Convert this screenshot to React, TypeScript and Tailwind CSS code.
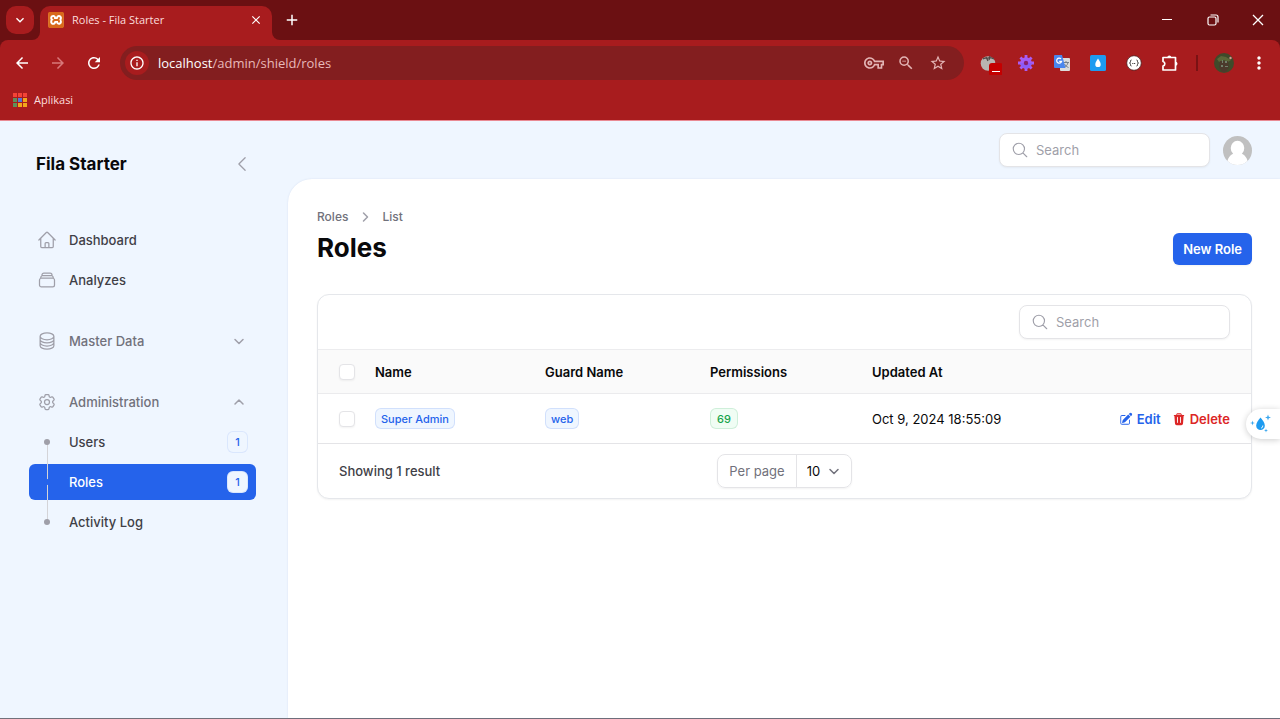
import React, { useState } from "react";
import {
  MdArrowBack,
  MdArrowForward,
  MdRefresh,
  MdInfoOutline,
  MdOutlineVpnKey,
  MdZoomOut,
  MdStarBorder,
  MdMoreVert,
  MdClose,
  MdAdd,
  MdKeyboardArrowDown,
} from "react-icons/md";
import { SiXampp } from "react-icons/si";
import {
  HiOutlineHome,
  HiOutlineRectangleStack,
  HiOutlineCircleStack,
  HiOutlineCog6Tooth,
  HiOutlineChevronLeft,
  HiOutlineMagnifyingGlass,
  HiPencilSquare,
  HiTrash,
} from "react-icons/hi2";

const appTiles = [
  "bg-[#f44336]", "bg-[#f44336]", "bg-[#f44336]",
  "bg-[#5f8f5a]", "bg-[#5478d8]", "bg-[#f2a61c]",
  "bg-[#5f8f5a]", "bg-[#f2a61c]", "bg-[#f2a61c]",
];

function TabStrip() {
  return (
    <div className="flex h-10 items-end bg-[#6b1012] pl-1.5 text-white">
      <button aria-label="Search tabs" className="mb-1.5 flex size-7 items-center justify-center rounded-[10px] bg-[#a81c1e]">
        <MdKeyboardArrowDown className="size-4" />
      </button>
      <div className="relative ml-1.5 flex h-[34px] w-58 items-center rounded-t-[10px] bg-[#a81c1e] pb-1.5 pr-2 pl-2">
        <span className="absolute bottom-0 -left-2 size-2 bg-[#a81c1e]">
          <span className="block size-2 rounded-br-lg bg-[#6b1012]" />
        </span>
        <span className="absolute -right-2 bottom-0 size-2 bg-[#a81c1e]">
          <span className="block size-2 rounded-bl-lg bg-[#6b1012]" />
        </span>
        <span className="flex size-4 items-center justify-center rounded-sm bg-white">
          <SiXampp className="size-4 text-[#d9691a]" />
        </span>
        <span className="ml-2 flex-1 font-['Open_Sans',sans-serif] text-[11px] text-[#fbdcdc]">Roles - Fila Starter</span>
        <button aria-label="Close tab" className="flex size-4 items-center justify-center">
          <MdClose className="size-3.5" />
        </button>
      </div>
      <button aria-label="New tab" className="mb-1.5 ml-1.5 flex size-7 items-center justify-center">
        <MdAdd className="size-[18px]" />
      </button>
      <div className="ml-auto flex h-10">
        <button aria-label="Minimize" className="flex w-[46px] items-center justify-center">
          <svg viewBox="0 0 12 12" className="size-3" stroke="currentColor" fill="none"><path d="M1 5.5h10" /></svg>
        </button>
        <button aria-label="Restore" className="flex w-[46px] items-center justify-center">
          <svg viewBox="0 0 12 12" className="size-3" stroke="currentColor" strokeWidth="1.2" fill="none">
            <rect x="1" y="3" width="8" height="8" rx="1.5" />
            <path d="M3.5 1H9a2 2 0 0 1 2 2v5.5" />
          </svg>
        </button>
        <button aria-label="Close" className="flex w-11 items-center justify-center">
          <svg viewBox="0 0 12 12" className="size-3" stroke="currentColor" strokeWidth="1.3" fill="none"><path d="M1 1l10 10M11 1L1 11" /></svg>
        </button>
      </div>
    </div>
  );
}

function Gear() {
  return (
    <svg viewBox="0 0 16 16" className="size-4">
      <g stroke="#a95cf2" strokeWidth="2.8">
        <path d="M8 0v16M0 8h16M2.400 2.400l11.200 11.200M13.600 2.400L2.400 13.600" />
      </g>
      <circle cx="8" cy="8" r="5.8" fill="#a45cf4" />
      <path d="M2.200 8a5.800 5.800 0 0 0 11.600 0z" fill="#8b5cf6" />
      <circle cx="8" cy="8" r="2.2" fill="#8a1f6c" />
    </svg>
  );
}

function Toolbar() {
  const ext = "flex size-7 items-center justify-center";
  return (
    <div className="bg-[#6b1012]">
      <div className="rounded-t-lg border-b border-[#e98a93] bg-[#a81c1e] text-white">
        <div className="flex h-[46px] items-center pr-[7px] pl-2">
          <div className="flex gap-2">
            <button aria-label="Back" className={ext}><MdArrowBack className="size-[18px]" /></button>
            <button aria-label="Forward" className={ext}><MdArrowForward className="size-[18px] text-[#d8787a]" /></button>
            <button aria-label="Reload" className={ext}><MdRefresh className="size-[18px]" /></button>
          </div>
          <div className="mx-3 flex h-[34px] flex-1 items-center rounded-full bg-[#831e1f] pr-4 pl-[5px]">
            <span className="mr-[9px] flex size-6 items-center justify-center rounded-full bg-[#a81c1e]">
              <MdInfoOutline className="size-4" />
            </span>
            <span className="flex-1 font-['Open_Sans',sans-serif] text-[13px] leading-5 text-[#e8b9b9]">
              <span className="text-white">localhost</span>/admin/shield/roles
            </span>
            <div className="flex gap-3 text-[#e3b4b4]">
              <button aria-label="Passwords" className="flex size-5 items-center justify-center"><MdOutlineVpnKey className="size-5" /></button>
              <button aria-label="Zoom" className="flex size-5 items-center justify-center"><MdZoomOut className="size-[18px]" /></button>
              <button aria-label="Bookmark" className="flex size-5 items-center justify-center"><MdStarBorder className="size-[18px]" /></button>
            </div>
          </div>
          <div className="flex gap-2">
            <button aria-label="Blocker extension" className={ext}>
              <svg viewBox="0 0 24 24" className="size-6">
                <circle cx="10" cy="12.5" r="7.3" fill="#b9b5b2" />
                <path d="M5 8c2-2 3 0 5-1s4 0 6 1M8 6l2 4M12 5l-1 4" stroke="#4f4a48" strokeWidth="1.3" fill="none" />
                <rect x="11" y="12" width="14" height="13" rx="3" fill="#c40000" />
                <path d="M14 20.5h8" stroke="#fff" strokeWidth="1" />
              </svg>
            </button>
            <button aria-label="Settings extension" className={ext}><Gear /></button>
            <button aria-label="Translate extension" className={ext}>
              <svg viewBox="0 0 18 18" className="size-[18px]">
                <rect x="7" y="4" width="10" height="13" rx="1" fill="#dcdcdc" />
                <path d="M10 8.5h6M13 7v1.500M15 8.500c-.5 2.500-2 4-4 5M11.500 10c.8 1.500 2 2.600 4 3.500" stroke="#75808c" strokeWidth="1" fill="none" />
                <path d="M2 1h7l3.500 13H2a1 1 0 0 1-1-1V2a1 1 0 0 1 1-1z" fill="#4a86ee" />
                <path d="M8 4.900a2.500 2.500 0 1 0 .6 2.400H6.200" stroke="#fff" strokeWidth="1.200" fill="none" />
              </svg>
            </button>
            <button aria-label="Color picker extension" className={ext}>
              <svg viewBox="0 0 16 16" className="size-4">
                <rect width="16" height="16" rx="1.500" fill="#1d9bf0" />
                <path d="M8 3.500c1.600 2.400 2.700 4 2.700 5.900a2.700 2.700 0 0 1-5.400 0C5.300 7.500 6.400 5.900 8 3.500z" fill="#fff" />
              </svg>
            </button>
            <button aria-label="JSON extension" className={ext}>
              <svg viewBox="0 0 16 16" className="size-4">
                <circle cx="8" cy="8" r="7.300" fill="#fff" stroke="#4a2020" strokeWidth=".8" />
                <path d="M5.500 5c-1 0-1 .5-1 1.500S4 8 3.500 8c.5 0 1 .5 1 1.500s0 1.500 1 1.500M10.500 5c1 0 1 .5 1 1.500S12 8 12.500 8c-.5 0-1 .5-1 1.500s0 1.500-1 1.500" stroke="#333" fill="none" />
                <path d="M6.300 8.500h3.400" stroke="#333" strokeDasharray="1 .6" />
              </svg>
            </button>
            <button aria-label="Extensions" className={ext}>
              <svg viewBox="0 0 18 18" className="size-[18px]" fill="none" stroke="currentColor" strokeWidth="1.700" strokeLinejoin="round">
                <path d="M2 3.500h12.500v12.500H2v-4a2.300 2.300 0 0 0 0-4.500z" />
                <path d="M6.300 3.500a2 2 0 0 1 4 0zM14.500 7.700a2 2 0 0 1 0 4z" fill="currentColor" stroke="none" />
              </svg>
            </button>
          </div>
          <span className="ml-3 h-4 w-0.5 bg-[#7a1214]" />
          <button aria-label="Profile" className="mr-[11px] ml-4">
            <svg viewBox="0 0 20 20" className="size-5">
              <circle cx="10" cy="10" r="10" fill="#3f4a2a" />
              <path d="M3 6l4-3 5 1 5 3-3 2-4-2-5 2z" fill="#5b6738" />
              <path d="M6 8h8l1 6-3 5H8l-3-5z" fill="#4b3a2c" />
              <path d="M8 7h1v3H8zM11 8h2v2h-2zM7 12h2v2H7zM11 13h3v1h-3z" fill="#70806a" />
              <circle cx="16.500" cy="5" r="1.200" fill="#cf9a90" />
            </svg>
          </button>
          <button aria-label="Menu" className={ext}><MdMoreVert className="size-5" /></button>
        </div>
        <div className="flex h-[34px] items-start px-[13px] pt-1">
          <a href="#apps" className="flex items-center gap-[7px]">
            <span className="grid grid-cols-3 gap-px">
              {appTiles.map((c, i) => (
                <span key={i} className={`size-1 ${c}`} />
              ))}
            </span>
            <span className="font-['Open_Sans',sans-serif] text-[11px] leading-5 text-[#fbdcdc]">Aplikasi</span>
          </a>
        </div>
      </div>
    </div>
  );
}

function CountBadge({ children }: { children: React.ReactNode }) {
  return (
    <span className="flex h-[22px] w-[21px] items-center justify-center rounded-md bg-[#eff6ff] text-[11px] font-medium text-[#2563eb] ring-1 ring-[#2563eb]/10 ring-inset">
      {children}
    </span>
  );
}

const row = "flex h-9 items-center gap-3 rounded-md px-2";

function NavItem({ icon, label }: { icon: React.ReactNode; label: string }) {
  return (
    <a href="#" className={`${row} text-zinc-700`}>
      {icon}
      {label}
    </a>
  );
}

function GroupHeader({ icon, label, open }: { icon: React.ReactNode; label: string; open?: boolean }) {
  return (
    <button aria-expanded={!!open} className={`${row} w-full text-left text-zinc-500`}>
      {icon}
      <span className="flex-1">{label}</span>
      <svg viewBox="0 0 18 18" className="size-[18px] text-zinc-400" fill="none" stroke="currentColor" strokeWidth="1.5" strokeLinecap="round" strokeLinejoin="round">
        {open ? <path d="M5 11l4-4 4 4" /> : <path d="M5 7.500l4 4 4-4" />}
      </svg>
    </button>
  );
}

function SubItem({ label, count, active, first, last }: { label: string; count?: number; active?: boolean; first?: boolean; last?: boolean }) {
  return (
    <a href="#" className={active ? `${row} bg-[#2563eb] text-white` : `${row} text-zinc-700`}>
      <span className="relative flex size-5 items-center justify-center">
        {!first && <span className="absolute -top-3 bottom-1/2 w-px bg-zinc-300" />}
        {!last && <span className="absolute top-1/2 -bottom-3 w-px bg-zinc-300" />}
        <span className={active ? "relative size-1.5 rounded-full bg-[#2563eb]" : "relative size-1.5 rounded-full bg-zinc-400"} />
      </span>
      <span className="flex-1">{label}</span>
      {count !== undefined && <CountBadge>{count}</CountBadge>}
    </a>
  );
}

function Sidebar() {
  const icon = "size-5 text-zinc-400";
  return (
    <aside className="w-72 shrink-0 pr-8 pl-[29px] text-[13px] leading-5 font-medium">
      <div className="flex h-[86px] items-center justify-between pr-1 pl-[7px]">
        <span className="text-[17px] font-bold text-zinc-950">Fila Starter</span>
        <button aria-label="Collapse sidebar" className="text-zinc-400"><HiOutlineChevronLeft className="size-5" /></button>
      </div>
      <nav className="mt-[15px] flex flex-col gap-[25px]">
        <div className="flex flex-col gap-1">
          <NavItem icon={<HiOutlineHome className={icon} />} label="Dashboard" />
          <NavItem icon={<HiOutlineRectangleStack className={icon} />} label="Analyzes" />
        </div>
        <GroupHeader icon={<HiOutlineCircleStack className={icon} />} label="Master Data" />
        <div className="flex flex-col gap-1">
          <GroupHeader icon={<HiOutlineCog6Tooth className={icon} />} label="Administration" open />
          <SubItem label="Users" count={1} first />
          <SubItem label="Roles" count={1} active />
          <SubItem label="Activity Log" last />
        </div>
      </nav>
    </aside>
  );
}

function SearchBox({ label }: { label: string }) {
  return (
    <label className="flex h-[34px] w-[211px] items-center gap-[7px] rounded-lg border border-zinc-200 bg-white pr-3 pl-[11px] shadow-xs">
      <HiOutlineMagnifyingGlass className="size-[18px] shrink-0 text-zinc-400" />
      <input type="search" aria-label={label} placeholder="Search" className="w-full min-w-0 text-[13px] leading-5 outline-none placeholder:text-zinc-400" />
    </label>
  );
}

function Tag({ tone, children }: { tone: "blue" | "green"; children: React.ReactNode }) {
  return (
    <span
      className={
        tone === "blue"
          ? "flex h-[21px] w-fit items-center rounded-md bg-[#eff6ff] px-1.5 text-[11px] font-medium text-[#2563eb] ring-1 ring-[#2563eb]/15 ring-inset"
          : "flex h-[21px] w-fit items-center rounded-md bg-[#f0fdf4] px-[7px] text-[11px] font-medium text-[#16a34a] ring-1 ring-[#16a34a]/15 ring-inset"
      }
    >
      {children}
    </span>
  );
}

function Check({ label, checked, onChange }: { label: string; checked: boolean; onChange: () => void }) {
  return (
    <input
      type="checkbox"
      aria-label={label}
      checked={checked}
      onChange={onChange}
      className="block size-4 appearance-none rounded border border-zinc-200 bg-white shadow-xs checked:border-[#2563eb] checked:bg-[#2563eb]"
    />
  );
}

function RolesTable() {
  const [picked, setPicked] = useState(false);
  const toggle = () => setPicked(!picked);
  return (
    <section className="overflow-hidden rounded-xl border border-[#e5e7eb] bg-white shadow-xs">
      <div className="flex h-[54px] items-center justify-end px-[21px]">
        <SearchBox label="Search roles" />
      </div>
      <table className="w-full table-fixed text-left text-[13px] leading-5 text-zinc-950">
        <colgroup>
          <col className="w-[47px]" />
          <col className="w-[170px]" />
          <col className="w-[165px]" />
          <col className="w-[162px]" />
          <col />
          <col className="w-[160px]" />
        </colgroup>
        <thead>
          <tr className="h-11 border-y border-zinc-200/70 bg-zinc-50">
            <th className="pl-[21px]"><Check label="Select all" checked={picked} onChange={toggle} /></th>
            <th className="px-2.5 font-semibold">Name</th>
            <th className="px-2.5 font-semibold">Guard Name</th>
            <th className="px-2.5 font-semibold">Permissions</th>
            <th className="px-2.5 font-semibold">Updated At</th>
            <th aria-label="Actions" />
          </tr>
        </thead>
        <tbody>
          <tr className="h-[50px] border-b border-zinc-200">
            <td className="pl-[21px]"><Check label="Select Super Admin" checked={picked} onChange={toggle} /></td>
            <td className="px-2.5"><Tag tone="blue">Super Admin</Tag></td>
            <td className="px-2.5"><Tag tone="blue">web</Tag></td>
            <td className="px-2.5"><Tag tone="green">69</Tag></td>
            <td className="px-2.5">Oct 9, 2024 18:55:09</td>
            <td className="pr-[21px]">
              <div className="flex justify-end gap-[11px] font-semibold">
                <a href="#edit" className="flex items-center gap-1 text-[#2563eb]"><HiPencilSquare className="size-3.5" />Edit</a>
                <button className="flex items-center gap-1 text-[#dc2626]"><HiTrash className="size-3.5" />Delete</button>
              </div>
            </td>
          </tr>
        </tbody>
      </table>
      <div className="grid h-[54px] grid-cols-3 items-center px-[21px] text-[13px] leading-5">
        <span className="font-medium text-zinc-700">Showing 1 result</span>
        <div className="flex h-[34px] items-center justify-self-center rounded-lg border border-zinc-200 shadow-xs">
          <label htmlFor="per-page" className="px-[11px] text-zinc-500">Per page</label>
          <div className="relative flex h-full items-center border-l border-zinc-200">
            <select id="per-page" className="h-full w-[54px] appearance-none pl-2.5 text-zinc-950 outline-none">
              <option>10</option>
              <option>25</option>
              <option>50</option>
            </select>
            <svg viewBox="0 0 18 18" className="pointer-events-none absolute right-2 size-[18px] text-zinc-500" fill="none" stroke="currentColor" strokeWidth="1.5" strokeLinecap="round" strokeLinejoin="round">
              <path d="M5 7.500l4 4 4-4" />
            </svg>
          </div>
        </div>
      </div>
    </section>
  );
}

function Sparkle() {
  return (
    <button aria-label="Open assistant" className="absolute top-[409px] right-0 flex h-[30px] w-[34px] items-center rounded-l-full bg-white pl-1 shadow-[0_1px_6px_rgba(0,0,0,0.2)]">
      <svg viewBox="0 0 22 20" className="h-5 w-[22px]">
        <path d="M10.500 3.500c2.600 3.200 4.300 5.600 4.300 8.200a4.300 4.300 0 0 1-8.600 0c0-2.600 1.700-5 4.300-8.200z" fill="#1d9bf0" />
        <path d="M12.800 11.500a2.400 2.400 0 0 1-1.800 2.700" stroke="#fff" strokeWidth=".9" fill="none" />
        <path d="M18 .5l.8 2.200 2.200.8-2.200.8L18 6.500l-.8-2.200-2.200-.8 2.200-.8zM2.500 6.500l.6 1.900 1.900.6-1.900.6-.6 1.900-.6-1.900L0 9l1.900-.6zM16 14.500l.5 1.500 1.500.5-1.500.5-.5 1.500-.5-1.500-1.500-.5 1.500-.5z" fill="#3ba7ee" />
      </svg>
    </button>
  );
}

export default function App() {
  return (
    <div className="relative flex min-h-screen flex-col border-b border-zinc-500 bg-[#eff6ff] font-[Inter,sans-serif]">
      <header>
        <TabStrip />
        <Toolbar />
      </header>
      <div className="flex flex-1">
        <Sidebar />
        <div className="flex min-w-0 flex-1 flex-col">
          <div className="flex h-[58px] items-center justify-end gap-[13px] pr-7">
            <SearchBox label="Global search" />
            <button aria-label="User menu">
              <svg viewBox="0 0 30 30" className="size-[29px]">
                <defs><clipPath id="avatar"><circle cx="15" cy="15" r="15" /></clipPath></defs>
                <g clipPath="url(#avatar)">
                  <rect width="30" height="30" fill="#c0c0c0" />
                  <ellipse cx="15" cy="12.500" rx="7" ry="7.500" fill="#fff" />
                  <path d="M4 30c0-7 4-11.500 8-12h6c4 .5 8 5 8 12z" fill="#fff" />
                </g>
              </svg>
            </button>
          </div>
          <main className="flex-1 rounded-tl-3xl bg-white px-[29px] pt-[29px] pr-7 shadow-[0_0_2px_rgba(30,58,138,0.12)]">
            <div className="flex items-end justify-between">
              <div>
                <nav aria-label="Breadcrumb" className="flex h-[18px] items-center gap-2 text-[12px] font-medium text-zinc-500">
                  <a href="#roles">Roles</a>
                  <svg viewBox="0 0 18 18" className="size-[18px] text-zinc-400" fill="none" stroke="currentColor" strokeWidth="1.500" strokeLinecap="round" strokeLinejoin="round">
                    <path d="M7.500 5l4 4-4 4" />
                  </svg>
                  <a href="#list">List</a>
                </nav>
                <h1 className="mt-1 text-[26px] leading-9 font-bold text-zinc-950">Roles</h1>
              </div>
              <button className="mb-px h-8 rounded-md bg-[#2563eb] px-2.5 text-[13px] leading-5 font-semibold text-white shadow-xs">New Role</button>
            </div>
            <div className="mt-7">
              <RolesTable />
            </div>
          </main>
        </div>
      </div>
      <Sparkle />
    </div>
  );
}
